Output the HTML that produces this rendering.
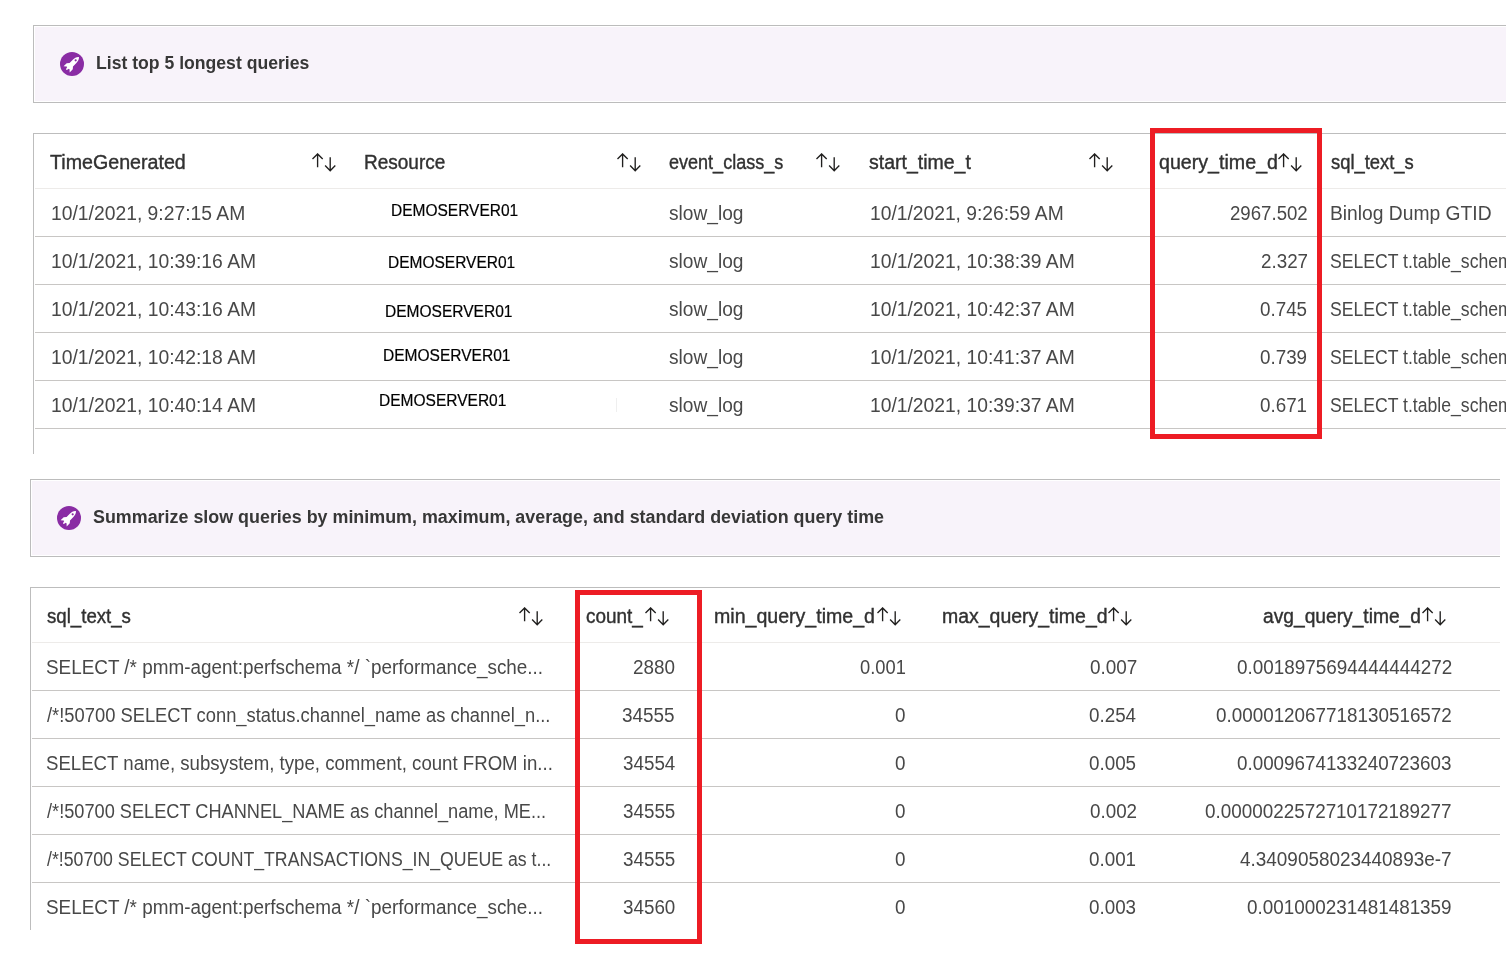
<!DOCTYPE html>
<html><head><meta charset="utf-8"><title>Log Analytics query results</title><style>
html,body{margin:0;padding:0;background:#fff;}
body{width:1506px;height:979px;position:relative;overflow:hidden;font-family:"Liberation Sans",sans-serif;}
.t{position:absolute;white-space:nowrap;transform-origin:0 0;filter:grayscale(1);}
.dm{filter:none;}
.h{font-size:20px;line-height:20px;color:#323130;-webkit-text-stroke:0.4px #323130;}
.d{font-size:20px;line-height:20px;color:#494846;}
.ttl{font-size:18.9px;line-height:19px;font-weight:700;color:#383736;}
.dm{font-size:16px;line-height:16px;color:#000;-webkit-text-stroke:0.2px #000;}
.ic{position:absolute;display:block;}
.panel{position:absolute;box-sizing:content-box;border:1px solid #bcbcbc;background:#f8f3fa;box-shadow:inset 0 0 0 1px #fff;}
.hl{position:absolute;height:1px;}
.vl{position:absolute;width:1px;background:#bdbdbd;}
.red{position:absolute;border:5px solid #ed1c24;}
</style></head>
<body>
<div class="panel" style="left:33px;top:25px;width:1500px;height:76px"></div>
<svg class="ic" style="left:60px;top:52px" width="24" height="24" viewBox="0 0 24 24"><circle cx="12" cy="12" r="12" fill="#8a2ca4"/><g transform="rotate(45 12 12)"><path fill="#fff" d="M12 2.2C13.8 3.6 14.4 6 14.4 8.5L14.4 13L16.3 15.2L16.3 19.6L14.2 17.6L13.2 17.6L12.6 20L11.4 20L10.8 17.6L9.8 17.6L7.7 19.6L7.7 15.2L9.6 13L9.6 8.5C9.6 6 10.2 3.6 12 2.2Z"/><circle cx="12" cy="6.8" r="1.1" fill="#8a2ca4"/></g></svg>
<div class="hl" style="left:33px;top:133px;width:1480px;background:#bdbdbd"></div>
<div class="vl" style="left:33px;top:133px;height:321px"></div>
<div class="hl" style="left:35px;top:188px;width:1480px;background:#edebe9"></div>
<div class="hl" style="left:35px;top:236px;width:1480px;background:#c8c6c4"></div>
<div class="hl" style="left:35px;top:284px;width:1480px;background:#c8c6c4"></div>
<div class="hl" style="left:35px;top:332px;width:1480px;background:#c8c6c4"></div>
<div class="hl" style="left:35px;top:380px;width:1480px;background:#c8c6c4"></div>
<div class="hl" style="left:35px;top:428px;width:1480px;background:#c8c6c4"></div>
<svg class="ic" style="left:312px;top:153px" width="25" height="19" viewBox="0 0 25 19"><g fill="none" stroke="#201f1e" stroke-width="1.35"><path d="M5.6 0.9V14.3M0.5 6L5.6 0.9L10.7 6"/><path d="M18.2 4.3V17.7M13.1 12.6L18.2 17.7L23.3 12.6"/></g></svg>
<svg class="ic" style="left:617px;top:153px" width="25" height="19" viewBox="0 0 25 19"><g fill="none" stroke="#201f1e" stroke-width="1.35"><path d="M5.6 0.9V14.3M0.5 6L5.6 0.9L10.7 6"/><path d="M18.2 4.3V17.7M13.1 12.6L18.2 17.7L23.3 12.6"/></g></svg>
<svg class="ic" style="left:816px;top:153px" width="25" height="19" viewBox="0 0 25 19"><g fill="none" stroke="#201f1e" stroke-width="1.35"><path d="M5.6 0.9V14.3M0.5 6L5.6 0.9L10.7 6"/><path d="M18.2 4.3V17.7M13.1 12.6L18.2 17.7L23.3 12.6"/></g></svg>
<svg class="ic" style="left:1089px;top:153px" width="25" height="19" viewBox="0 0 25 19"><g fill="none" stroke="#201f1e" stroke-width="1.35"><path d="M5.6 0.9V14.3M0.5 6L5.6 0.9L10.7 6"/><path d="M18.2 4.3V17.7M13.1 12.6L18.2 17.7L23.3 12.6"/></g></svg>
<svg class="ic" style="left:1278px;top:153px" width="25" height="19" viewBox="0 0 25 19"><g fill="none" stroke="#201f1e" stroke-width="1.35"><path d="M5.6 0.9V14.3M0.5 6L5.6 0.9L10.7 6"/><path d="M18.2 4.3V17.7M13.1 12.6L18.2 17.7L23.3 12.6"/></g></svg>
<div style="position:absolute;left:616px;top:398px;width:1px;height:14px;background:#efefef"></div>
<div class="panel" style="left:30px;top:479px;width:1469px;height:76px;border-right:none;box-shadow:inset 1px 1px 0 #fff,inset 0 -1px 0 #fff"></div>
<svg class="ic" style="left:57px;top:506px" width="24" height="24" viewBox="0 0 24 24"><circle cx="12" cy="12" r="12" fill="#8a2ca4"/><g transform="rotate(45 12 12)"><path fill="#fff" d="M12 2.2C13.8 3.6 14.4 6 14.4 8.5L14.4 13L16.3 15.2L16.3 19.6L14.2 17.6L13.2 17.6L12.6 20L11.4 20L10.8 17.6L9.8 17.6L7.7 19.6L7.7 15.2L9.6 13L9.6 8.5C9.6 6 10.2 3.6 12 2.2Z"/><circle cx="12" cy="6.8" r="1.1" fill="#8a2ca4"/></g></svg>
<div class="hl" style="left:30px;top:587px;width:1470px;background:#bdbdbd"></div>
<div class="vl" style="left:30px;top:587px;height:343px"></div>
<div class="hl" style="left:32px;top:642px;width:1468px;background:#edebe9"></div>
<div class="hl" style="left:32px;top:690px;width:1468px;background:#c8c6c4"></div>
<div class="hl" style="left:32px;top:738px;width:1468px;background:#c8c6c4"></div>
<div class="hl" style="left:32px;top:786px;width:1468px;background:#c8c6c4"></div>
<div class="hl" style="left:32px;top:834px;width:1468px;background:#c8c6c4"></div>
<div class="hl" style="left:32px;top:882px;width:1468px;background:#c8c6c4"></div>
<svg class="ic" style="left:519px;top:607px" width="25" height="19" viewBox="0 0 25 19"><g fill="none" stroke="#201f1e" stroke-width="1.35"><path d="M5.6 0.9V14.3M0.5 6L5.6 0.9L10.7 6"/><path d="M18.2 4.3V17.7M13.1 12.6L18.2 17.7L23.3 12.6"/></g></svg>
<svg class="ic" style="left:645px;top:607px" width="25" height="19" viewBox="0 0 25 19"><g fill="none" stroke="#201f1e" stroke-width="1.35"><path d="M5.6 0.9V14.3M0.5 6L5.6 0.9L10.7 6"/><path d="M18.2 4.3V17.7M13.1 12.6L18.2 17.7L23.3 12.6"/></g></svg>
<svg class="ic" style="left:877px;top:607px" width="25" height="19" viewBox="0 0 25 19"><g fill="none" stroke="#201f1e" stroke-width="1.35"><path d="M5.6 0.9V14.3M0.5 6L5.6 0.9L10.7 6"/><path d="M18.2 4.3V17.7M13.1 12.6L18.2 17.7L23.3 12.6"/></g></svg>
<svg class="ic" style="left:1108px;top:607px" width="25" height="19" viewBox="0 0 25 19"><g fill="none" stroke="#201f1e" stroke-width="1.35"><path d="M5.6 0.9V14.3M0.5 6L5.6 0.9L10.7 6"/><path d="M18.2 4.3V17.7M13.1 12.6L18.2 17.7L23.3 12.6"/></g></svg>
<svg class="ic" style="left:1422px;top:607px" width="25" height="19" viewBox="0 0 25 19"><g fill="none" stroke="#201f1e" stroke-width="1.35"><path d="M5.6 0.9V14.3M0.5 6L5.6 0.9L10.7 6"/><path d="M18.2 4.3V17.7M13.1 12.6L18.2 17.7L23.3 12.6"/></g></svg>
<div class="t ttl" style="left:96.47px;top:53px;transform:scaleX(0.9322)">List top 5 longest queries</div>
<div class="t ttl" style="left:92.85px;top:507px;transform:scaleX(0.9466)">Summarize slow queries by minimum, maximum, average, and standard deviation query time</div>
<div class="t h" style="left:49.90px;top:152px;transform:scaleX(0.9825)">TimeGenerated</div>
<div class="t h" style="left:364.05px;top:152px;transform:scaleX(0.9500)">Resource</div>
<div class="t h" style="left:669.20px;top:152px;transform:scaleX(0.9016)">event_class_s</div>
<div class="t h" style="left:869.20px;top:152px;transform:scaleX(0.9743)">start_time_t</div>
<div class="t h" style="left:1158.70px;top:152px;transform:scaleX(0.9817)">query_time_d</div>
<div class="t h" style="left:1330.90px;top:152px;transform:scaleX(0.9189)">sql_text_s</div>
<div class="t h" style="left:46.50px;top:606px;transform:scaleX(0.9322)">sql_text_s</div>
<div class="t h" style="left:586.20px;top:606px;transform:scaleX(0.9459)">count_</div>
<div class="t h" style="left:714.22px;top:606px;transform:scaleX(0.9785)">min_query_time_d</div>
<div class="t h" style="left:941.53px;top:606px;transform:scaleX(0.9732)">max_query_time_d</div>
<div class="t h" style="left:1262.90px;top:606px;transform:scaleX(0.9598)">avg_query_time_d</div>
<div class="t d" style="left:50.63px;top:203px;transform:scaleX(0.9653)">10/1/2021, 9:27:15 AM</div>
<div class="t d" style="left:668.64px;top:203px;transform:scaleX(0.9566)">slow_log</div>
<div class="t d" style="left:869.74px;top:203px;transform:scaleX(0.9623)">10/1/2021, 9:26:59 AM</div>
<div class="t d" style="left:1230.17px;top:203px;transform:scaleX(0.9317)">2967.502</div>
<div class="t d" style="left:1329.64px;top:203px;transform:scaleX(0.9627)">Binlog Dump GTID</div>
<div class="t d" style="left:50.63px;top:251px;transform:scaleX(0.9657)">10/1/2021, 10:39:16 AM</div>
<div class="t d" style="left:668.64px;top:251px;transform:scaleX(0.9566)">slow_log</div>
<div class="t d" style="left:869.74px;top:251px;transform:scaleX(0.9638)">10/1/2021, 10:38:39 AM</div>
<div class="t d" style="left:1261.42px;top:251px;transform:scaleX(0.9403)">2.327</div>
<div class="t d" style="left:1329.72px;top:251px;transform:scaleX(0.8804)">SELECT t.table_schema, t.table_name</div>
<div class="t d" style="left:50.63px;top:299px;transform:scaleX(0.9657)">10/1/2021, 10:43:16 AM</div>
<div class="t d" style="left:668.64px;top:299px;transform:scaleX(0.9566)">slow_log</div>
<div class="t d" style="left:869.74px;top:299px;transform:scaleX(0.9638)">10/1/2021, 10:42:37 AM</div>
<div class="t d" style="left:1260.48px;top:299px;transform:scaleX(0.9403)">0.745</div>
<div class="t d" style="left:1329.72px;top:299px;transform:scaleX(0.8804)">SELECT t.table_schema, t.table_name</div>
<div class="t d" style="left:50.63px;top:347px;transform:scaleX(0.9657)">10/1/2021, 10:42:18 AM</div>
<div class="t d" style="left:668.64px;top:347px;transform:scaleX(0.9566)">slow_log</div>
<div class="t d" style="left:869.74px;top:347px;transform:scaleX(0.9638)">10/1/2021, 10:41:37 AM</div>
<div class="t d" style="left:1260.48px;top:347px;transform:scaleX(0.9403)">0.739</div>
<div class="t d" style="left:1329.72px;top:347px;transform:scaleX(0.8804)">SELECT t.table_schema, t.table_name</div>
<div class="t d" style="left:50.63px;top:395px;transform:scaleX(0.9657)">10/1/2021, 10:40:14 AM</div>
<div class="t d" style="left:668.64px;top:395px;transform:scaleX(0.9566)">slow_log</div>
<div class="t d" style="left:869.74px;top:395px;transform:scaleX(0.9638)">10/1/2021, 10:39:37 AM</div>
<div class="t d" style="left:1260.48px;top:395px;transform:scaleX(0.9403)">0.671</div>
<div class="t d" style="left:1329.72px;top:395px;transform:scaleX(0.8804)">SELECT t.table_schema, t.table_name</div>
<div class="t dm" style="left:390.83px;top:203px;transform:scaleX(0.9685)">DEMOSERVER01</div>
<div class="t dm" style="left:388.13px;top:255px;transform:scaleX(0.9685)">DEMOSERVER01</div>
<div class="t dm" style="left:384.93px;top:304px;transform:scaleX(0.9708)">DEMOSERVER01</div>
<div class="t dm" style="left:382.93px;top:348px;transform:scaleX(0.9708)">DEMOSERVER01</div>
<div class="t dm" style="left:379.03px;top:393px;transform:scaleX(0.9700)">DEMOSERVER01</div>
<div class="t d" style="left:46.36px;top:657px;transform:scaleX(0.9441)">SELECT /* pmm-agent:perfschema */ `performance_sche...</div>
<div class="t d" style="left:632.86px;top:657px;transform:scaleX(0.9442)">2880</div>
<div class="t d" style="left:859.68px;top:657px;transform:scaleX(0.9163)">0.001</div>
<div class="t d" style="left:1089.95px;top:657px;transform:scaleX(0.9458)">0.007</div>
<div class="t d" style="left:1236.76px;top:657px;transform:scaleX(0.9442)">0.0018975694444444272</div>
<div class="t d" style="left:47.30px;top:705px;transform:scaleX(0.9172)">/*!50700 SELECT conn_status.channel_name as channel_n...</div>
<div class="t d" style="left:622.35px;top:705px;transform:scaleX(0.9463)">34555</div>
<div class="t d" style="left:895.16px;top:705px;transform:scaleX(0.9403)">0</div>
<div class="t d" style="left:1089.28px;top:705px;transform:scaleX(0.9403)">0.254</div>
<div class="t d" style="left:1215.56px;top:705px;transform:scaleX(0.9422)">0.000012067718130516572</div>
<div class="t d" style="left:46.37px;top:753px;transform:scaleX(0.9312)">SELECT name, subsystem, type, comment, count FROM in...</div>
<div class="t d" style="left:622.68px;top:753px;transform:scaleX(0.9403)">34554</div>
<div class="t d" style="left:895.16px;top:753px;transform:scaleX(0.9403)">0</div>
<div class="t d" style="left:1089.28px;top:753px;transform:scaleX(0.9403)">0.005</div>
<div class="t d" style="left:1236.76px;top:753px;transform:scaleX(0.9401)">0.0009674133240723603</div>
<div class="t d" style="left:47.30px;top:801px;transform:scaleX(0.9095)">/*!50700 SELECT CHANNEL_NAME as channel_name, ME...</div>
<div class="t d" style="left:622.68px;top:801px;transform:scaleX(0.9403)">34555</div>
<div class="t d" style="left:895.16px;top:801px;transform:scaleX(0.9403)">0</div>
<div class="t d" style="left:1090.22px;top:801px;transform:scaleX(0.9403)">0.002</div>
<div class="t d" style="left:1204.96px;top:801px;transform:scaleX(0.9431)">0.0000022572710172189277</div>
<div class="t d" style="left:47.30px;top:849px;transform:scaleX(0.8849)">/*!50700 SELECT COUNT_TRANSACTIONS_IN_QUEUE as t...</div>
<div class="t d" style="left:622.68px;top:849px;transform:scaleX(0.9403)">34555</div>
<div class="t d" style="left:895.16px;top:849px;transform:scaleX(0.9403)">0</div>
<div class="t d" style="left:1089.28px;top:849px;transform:scaleX(0.9403)">0.001</div>
<div class="t d" style="left:1240.10px;top:849px;transform:scaleX(0.9462)">4.3409058023440893e-7</div>
<div class="t d" style="left:46.36px;top:897px;transform:scaleX(0.9441)">SELECT /* pmm-agent:perfschema */ `performance_sche...</div>
<div class="t d" style="left:622.68px;top:897px;transform:scaleX(0.9403)">34560</div>
<div class="t d" style="left:895.16px;top:897px;transform:scaleX(0.9403)">0</div>
<div class="t d" style="left:1089.28px;top:897px;transform:scaleX(0.9403)">0.003</div>
<div class="t d" style="left:1247.36px;top:897px;transform:scaleX(0.9433)">0.001000231481481359</div>
<div class="red" style="left:1150px;top:128px;width:162px;height:301px"></div>
<div class="red" style="left:575px;top:590px;width:117px;height:344px"></div>
</body></html>
